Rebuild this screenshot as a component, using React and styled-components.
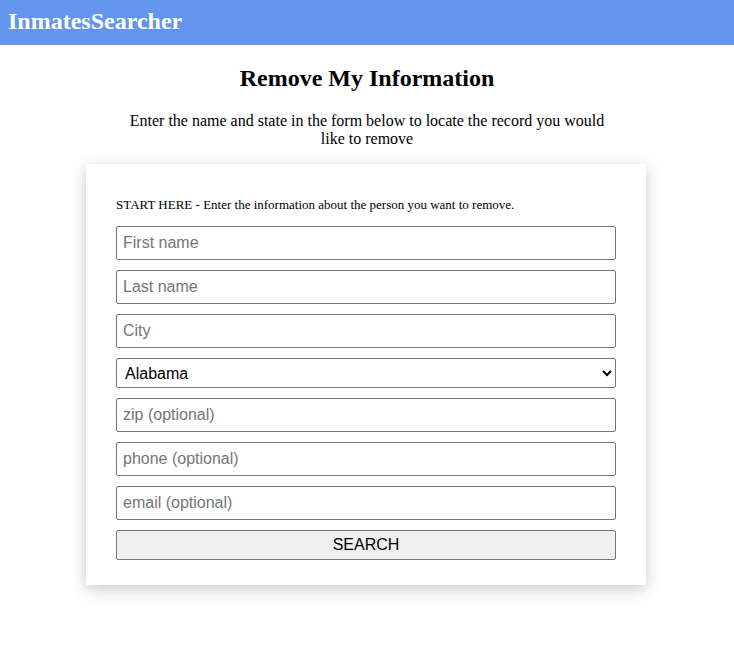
import React from 'react'
import styled, { createGlobalStyle } from 'styled-components'

const GlobalStyle = createGlobalStyle`
  body {
    margin: 0;
    font-family: "Liberation Serif", "Times New Roman", serif;
    background: #fff;
  }
`

const Header = styled.header`
  height: 45px;
  background: #6495ed;
  display: flex;
  align-items: center;
  padding: 0 8px;
`

const Brand = styled.div`
  color: #fff;
  font-weight: bold;
  font-size: 24px;
  margin-top: -3px;
`

const Main = styled.main`
  display: flex;
  flex-direction: column;
  align-items: center;
  padding-bottom: 60px;
`

const Title = styled.h1`
  font-size: 24px;
  margin: 19px 0 0;
  line-height: 28px;
`

const Intro = styled.p`
  font-size: 16px;
  line-height: 18px;
  max-width: 490px;
  text-align: center;
  margin: 20px 0 16px;
`

const Card = styled.div`
  width: 560px;
  box-sizing: border-box;
  padding: 34px 30px 25px;
  margin-left: -2px;
  background: #fff;
  box-shadow: 0 4px 14px rgba(0, 0, 0, 0.22);
`

const Hint = styled.div`
  font-size: 13px;
  line-height: 14px;
  margin-bottom: 14px;
`

const Form = styled.form`
  display: flex;
  flex-direction: column;
  gap: 10px;
`

const Field = styled.input`
  height: 34px;
  box-sizing: border-box;
  border: 1px solid #767676;
  border-radius: 2px;
  padding: 0 6px;
  font-family: "Liberation Sans", Arial, sans-serif;
  font-size: 16px;
  color: #000;
  &::placeholder {
    color: #757575;
  }
`

const Select = styled.select`
  height: 30px;
  box-sizing: border-box;
  border: 1px solid #767676;
  border-radius: 2px;
  padding: 0 4px;
  font-family: "Liberation Sans", Arial, sans-serif;
  font-size: 16px;
  color: #000;
  background: #fff;
`

const Button = styled.button`
  height: 30px;
  border: 1px solid #767676;
  border-radius: 2px;
  background: #efefef;
  font-family: "Liberation Sans", Arial, sans-serif;
  font-size: 16px;
  color: #000;
`

const states = ['Alabama', 'Alaska', 'Arizona', 'Arkansas', 'California', 'Colorado']

const fields = ['First name', 'Last name', 'City']
const extras = ['zip (optional)', 'phone (optional)', 'email (optional)']

const App = () => (
  <>
    <GlobalStyle />
    <Header>
      <Brand>InmatesSearcher</Brand>
    </Header>
    <Main>
      <Title>Remove My Information</Title>
      <Intro>
        Enter the name and state in the form below to locate the record you would like to remove
      </Intro>
      <Card>
        <Hint>START HERE - Enter the information about the person you want to remove.</Hint>
        <Form onSubmit={(e) => e.preventDefault()}>
          {fields.map((f) => (
            <Field key={f} placeholder={f} />
          ))}
          <Select defaultValue="Alabama">
            {states.map((s) => (
              <option key={s}>{s}</option>
            ))}
          </Select>
          {extras.map((f) => (
            <Field key={f} placeholder={f} />
          ))}
          <Button type="submit">SEARCH</Button>
        </Form>
      </Card>
    </Main>
  </>
)

export default App
